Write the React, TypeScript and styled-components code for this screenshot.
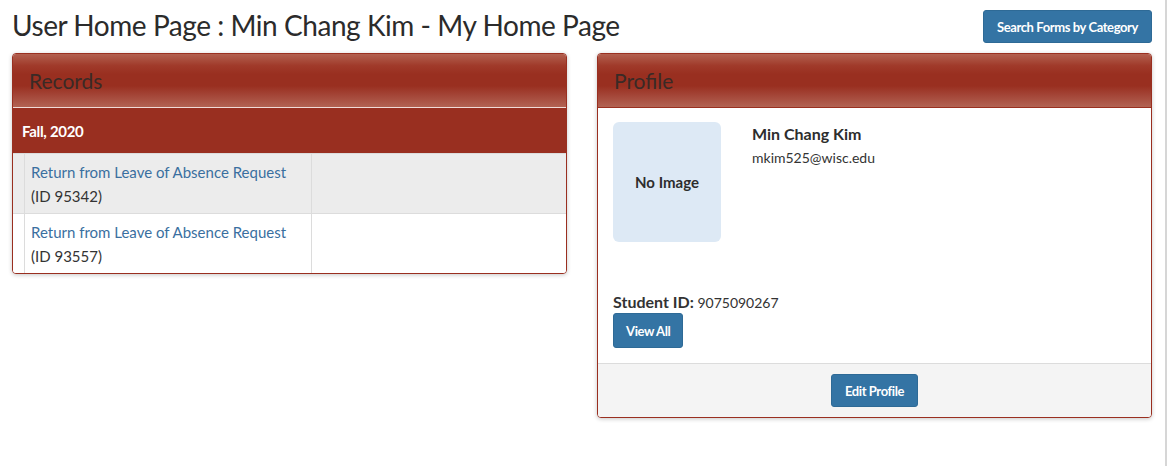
import React from "react";
import styled, { createGlobalStyle } from "styled-components";

const Global = createGlobalStyle`
  html, body { margin: 0; padding: 0; background: #fff; }
  body { font-family: Lato, "Noto Sans", sans-serif; color: #333; }
  * { box-sizing: border-box; }
`;

const Page = styled.div`
  width: 1167px;
  min-height: 466px;
  border-right: 2px solid #d6d6d6;
  padding: 10px 0 0 12px;
`;

const TopBar = styled.div`
  width: 1140px;
  display: flex;
  justify-content: space-between;
  align-items: flex-start;
  height: 43px;
`;

const Title = styled.h1`
  margin: 0;
  margin-top: -2px;
  font-weight: 400;
  font-size: 28px;
  line-height: 34px;
  color: #2b2b2b;
  letter-spacing: -0.45px;
`;

const Button = styled.button<{ $w?: number }>`
  background: #3474a4;
  color: #fff;
  border: 1px solid #2e6a96;
  border-radius: 3px;
  font-family: Lato, "Noto Sans", sans-serif;
  font-weight: 700;
  font-size: 13px;
  letter-spacing: -0.4px;
  height: ${(p) => (p.$w ? 35 : 33)}px;
  padding: 0 ${(p) => (p.$w ? 12 : 13)}px;
  cursor: pointer;
`;

const Columns = styled.div`
  width: 1140px;
  display: grid;
  grid-template-columns: 555px 555px;
  column-gap: 30px;
  align-items: start;
`;

const Panel = styled.div`
  border: 1px solid #9a2f20;
  border-radius: 4px;
  background: #fff;
  box-shadow: 0 1px 4px rgba(0, 0, 0, 0.22);
  overflow: hidden;
`;

const PanelHeader = styled.div<{ $light?: boolean }>`
  height: 54px;
  display: flex;
  align-items: center;
  padding-left: 16px;
  font-size: 21px;
  color: #3a2a26;
  background: linear-gradient(
    to bottom,
    #b2604f 0%,
    #a03a2a 22%,
    #992f20 38%,
    #992f20 60%,
    #a5483a 80%,
    #b26353 100%
  );
  border-bottom: 1px solid ${(p) => (p.$light ? "#f1dcd8" : "#9a2f20")};
`;

const TermRow = styled.div`
  height: 45px;
  background: #992f20;
  color: #fff;
  font-weight: 700;
  font-size: 15px;
  letter-spacing: -0.3px;
  display: flex;
  align-items: center;
  padding-left: 9px;
`;

const Table = styled.div`
  display: grid;
  grid-template-columns: 11px 287px 1fr;
`;

const Cell = styled.div<{ $alt?: boolean }>`
  background: ${(p) => (p.$alt ? "#ececec" : "#fff")};
  border-left: 1px solid #dcdcdc;
  border-top: 1px solid #dcdcdc;
  min-height: 60px;
  padding: 6px 6px 5px 6px;
  font-size: 15px;
  line-height: 24px;
  &:nth-child(3n + 1) {
    border-left: none;
  }
`;

const RecordLink = styled.a`
  color: #3a6f9f;
  text-decoration: none;
  display: block;
`;

const Body = styled.div`
  padding: 14px 15px 15px 15px;
`;

const ProfileTop = styled.div`
  display: flex;
  gap: 31px;
`;

const Avatar = styled.div`
  width: 108px;
  height: 120px;
  border-radius: 6px;
  background: #dde9f5;
  display: flex;
  align-items: center;
  justify-content: center;
  font-weight: 700;
  font-size: 15px;
  color: #2d2d2d;
`;

const Info = styled.div`
  font-size: 14px;
  line-height: 24px;
`;

const Name = styled.div`
  font-weight: 700;
  font-size: 16px;
  color: #2d2d2d;
`;

const StudentId = styled.div`
  margin-top: 50px;
  font-size: 14px;
  line-height: 20px;
  b { font-size: 16px; }
`;

const Footer = styled.div`
  background: #f4f4f4;
  border-top: 1px solid #dcdcdc;
  height: 54px;
  display: flex;
  align-items: center;
  justify-content: center;
`;

const records = [
  { id: "95342", alt: true },
  { id: "93557", alt: false },
];

export default function App() {
  return (
    <>
      <Global />
      <Page>
        <TopBar>
          <Title>User Home Page : Min Chang Kim - My Home Page</Title>
          <Button>Search Forms by Category</Button>
        </TopBar>
        <Columns>
          <Panel>
            <PanelHeader $light>Records</PanelHeader>
            <TermRow>Fall, 2020</TermRow>
            <Table>
              {records.map((r) => (
                <React.Fragment key={r.id}>
                  <Cell $alt={r.alt} />
                  <Cell $alt={r.alt}>
                    <RecordLink href="#">Return from Leave of Absence Request</RecordLink>
                    (ID {r.id})
                  </Cell>
                  <Cell $alt={r.alt} />
                </React.Fragment>
              ))}
            </Table>
          </Panel>
          <Panel>
            <PanelHeader>Profile</PanelHeader>
            <Body>
              <ProfileTop>
                <Avatar>No Image</Avatar>
                <Info>
                  <Name>Min Chang Kim</Name>
                  <div>mkim525@wisc.edu</div>
                </Info>
              </ProfileTop>
              <StudentId>
                <b>Student ID:</b> 9075090267
              </StudentId>
              <Button $w={1}>View All</Button>
            </Body>
            <Footer>
              <Button>Edit Profile</Button>
            </Footer>
          </Panel>
        </Columns>
      </Page>
    </>
  );
}
